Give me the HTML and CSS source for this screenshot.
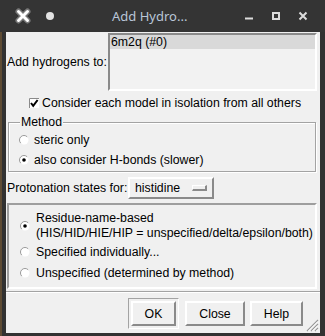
FILE: index.html
```html
<!DOCTYPE html>
<html>
<head>
<meta charset="utf-8">
<link rel="stylesheet" href="styles.css">
</head>
<body>
<div class="window">
  <div class="titlebar">
    <svg class="tb-x" width="18" height="18" viewBox="0 0 18 18">
      <path d="M4.5 4.5 L13.5 13.5 M13.5 4.5 L4.5 13.5" stroke="#7a7a7a" stroke-width="6" stroke-linecap="round"/>
      <path d="M4.5 4.5 L13.5 13.5 M13.5 4.5 L4.5 13.5" stroke="#ffffff" stroke-width="3" stroke-linecap="round"/>
    </svg>
    <span class="tb-dot"></span>
    <span class="tb-title">Add Hydro...</span>
    <svg class="tb-ctl tb-first" width="10" height="10" viewBox="0 0 10 10"><rect x="1" y="6.5" width="8" height="2" fill="#dcdcdc"/></svg>
    <svg class="tb-ctl" width="10" height="10" viewBox="0 0 10 10"><rect x="2" y="2" width="6" height="6" fill="none" stroke="#dcdcdc" stroke-width="2"/></svg>
    <svg class="tb-ctl" width="10" height="10" viewBox="0 0 10 10"><path d="M1.5 1.5 L8.5 8.5 M8.5 1.5 L1.5 8.5" stroke="#dcdcdc" stroke-width="2"/></svg>
  </div>
  <div class="body">
    <div class="target-row">
      <span class="target-label">Add hydrogens to:</span>
      <div class="listbox"><div class="list-item">6m2q (#0)</div></div>
    </div>
    <div class="check-row">
      <svg class="checkbox" width="10" height="10" viewBox="0 0 10 10">
        <rect x="0" y="0" width="10" height="10" fill="#fff"/>
        <path d="M0.5 10 V0.5 H10" stroke="#8a8a8a" fill="none"/>
        <path d="M2 5 L4.2 7.8 L8.6 2" stroke="#000" stroke-width="2" fill="none"/>
      </svg>
      <span>Consider each model in isolation from all others</span>
    </div>
    <fieldset class="method">
      <legend>Method</legend>
      <div class="options">
        <div class="radio-row">
          <svg class="radio" width="10" height="10" viewBox="0 0 10 10"><circle cx="5" cy="5" r="4.5" fill="#fff"/><path d="M1.8 8.2 A4.5 4.5 0 0 1 8.2 1.8" stroke="#9a9a9a" fill="none"/></svg>
          <span>steric only</span>
        </div>
        <div class="radio-row">
          <svg class="radio" width="10" height="10" viewBox="0 0 10 10"><circle cx="5" cy="5" r="4.5" fill="#fff"/><path d="M1.8 8.2 A4.5 4.5 0 0 1 8.2 1.8" stroke="#9a9a9a" fill="none"/><circle cx="5" cy="5" r="1.8" fill="#000"/></svg>
          <span>also consider H-bonds (slower)</span>
        </div>
      </div>
    </fieldset>
    <div class="proto-row">
      <span class="proto-label">Protonation states for:</span>
      <div class="menubutton"><span>histidine</span><span class="indicator"></span></div>
    </div>
    <div class="proto-frame">
      <div class="radio-row tall">
        <svg class="radio" width="10" height="10" viewBox="0 0 10 10"><circle cx="5" cy="5" r="4.5" fill="#fff"/><path d="M1.8 8.2 A4.5 4.5 0 0 1 8.2 1.8" stroke="#9a9a9a" fill="none"/><circle cx="5" cy="5" r="1.8" fill="#000"/></svg>
        <span class="two-line">Residue-name-based<br>(HIS/HID/HIE/HIP = unspecified/delta/epsilon/both)</span>
      </div>
      <div class="radio-row mid">
        <svg class="radio" width="10" height="10" viewBox="0 0 10 10"><circle cx="5" cy="5" r="4.5" fill="#fff"/><path d="M1.8 8.2 A4.5 4.5 0 0 1 8.2 1.8" stroke="#9a9a9a" fill="none"/></svg>
        <span>Specified individually...</span>
      </div>
      <div class="radio-row mid">
        <svg class="radio" width="10" height="10" viewBox="0 0 10 10"><circle cx="5" cy="5" r="4.5" fill="#fff"/><path d="M1.8 8.2 A4.5 4.5 0 0 1 8.2 1.8" stroke="#9a9a9a" fill="none"/></svg>
        <span>Unspecified (determined by method)</span>
      </div>
    </div>
    <div class="buttons">
      <div class="default-ring"><button class="btn btn-ok">OK</button></div>
      <button class="btn btn-close">Close</button>
      <button class="btn btn-help">Help</button>
    </div>
    <svg class="grip" width="14" height="14" viewBox="0 0 14 14">
      <path d="M13 2 L2 13 M13 6 L6 13 M13 10 L10 13" stroke="#9a9a9a" stroke-width="1.2"/>
      <path d="M13 3.4 L3.4 13 M13 7.4 L7.4 13 M13 11.4 L11.4 13" stroke="#ffffff" stroke-width="1"/>
    </svg>
  </div>
</div>
</body>
</html>
```
FILE: styles.css
```css
html, body {
  margin: 0;
  padding: 0;
  background: #333;
}

.window {
  width: 325px;
  height: 336px;
  background: linear-gradient(to right, #5e4b33 0, #5e4b33 2px, #323232 2px);
  position: relative;
  overflow: hidden;
  font-family: "Liberation Sans", Arial, sans-serif;
  font-size: 12.3px;
  color: #000;
}

.titlebar {
  height: 32px;
  background: #343434;
  display: flex;
  align-items: center;
  padding-right: 17px;
}

.tb-x {
  margin-left: 14px;
  flex: none;
}

.tb-dot {
  width: 8px;
  height: 8px;
  border-radius: 50%;
  background: #e2e2e2;
  margin-left: 14px;
  flex: none;
}

.tb-title {
  margin-left: 58px;
  font-family: "Noto Sans", "DejaVu Sans", sans-serif;
  font-size: 13px;
  color: #b9c6d8;
  white-space: nowrap;
}

.tb-ctl {
  flex: none;
  margin-left: 17px;
}

.tb-first {
  margin-left: auto;
}

.body {
  margin-left: 6px;
  width: 314px;
  height: 301px;
  background: #f0f0f0;
  display: flex;
  flex-direction: column;
  padding-top: 1px;
  box-sizing: border-box;
  position: relative;
}

.target-row {
  display: flex;
  align-items: center;
  height: 58px;
  padding-left: 1px;
  flex: none;
}

.target-label {
  width: 101px;
  flex: none;
  white-space: nowrap;
}

.listbox {
  flex: 1;
  height: 58px;
  box-sizing: border-box;
  border: 2px solid;
  border-color: #8a8a8a #ffffff #ffffff #8a8a8a;
  margin-right: 3px;
  background: #f2f2f2;
}

.list-item {
  background: #d9d9d9;
  height: 14px;
  line-height: 14px;
  padding-left: 1px;
  white-space: nowrap;
}

.check-row {
  display: flex;
  align-items: center;
  height: 24px;
  padding-left: 23px;
  flex: none;
  white-space: nowrap;
}

.checkbox {
  margin-right: 3px;
  flex: none;
}

.method {
  margin: 0 4px 0 2px;
  padding: 0;
  border: 1px solid #a3a3a3;
  box-shadow: inset 1px 1px 0 #fff, 1px 1px 0 #fff;
  min-width: 0;
  flex: none;
}

.method legend {
  margin-left: 11px;
  padding: 0 1px;
  line-height: 14px;
  background: #f0f0f0;
}

.options {
  padding: 1px 0 1px 10px;
}

.radio-row {
  display: flex;
  align-items: center;
  height: 20px;
  white-space: nowrap;
}

.radio {
  flex: none;
  margin-right: 5px;
}

.proto-row {
  display: flex;
  align-items: center;
  height: 31px;
  padding-left: 1px;
  flex: none;
}

.proto-label {
  width: 121px;
  flex: none;
  white-space: nowrap;
}

.menubutton {
  width: 86px;
  height: 22px;
  box-sizing: border-box;
  border: 2px solid;
  border-color: #ffffff #8a8a8a #8a8a8a #ffffff;
  display: flex;
  align-items: center;
  justify-content: space-between;
  padding: 0 5px;
}

.indicator {
  width: 15px;
  height: 6px;
  box-sizing: border-box;
  border-style: solid;
  border-width: 1px 2px 2px 1px;
  border-color: #ffffff #8a8a8a #8a8a8a #ffffff;
}

.proto-frame {
  margin: 0 3px 0 1px;
  height: 86px;
  box-sizing: border-box;
  border: 2px solid;
  border-color: #9e9e9e #ffffff #ffffff #9e9e9e;
  padding: 5px 0 0 11px;
  flex: none;
}

.proto-frame .radio {
  margin-right: 6px;
}

.radio-row.tall {
  height: 31px;
}

.radio-row.mid {
  height: 21px;
}

.two-line {
  line-height: 15px;
}

.buttons {
  margin-top: 2px;
  border-top: 1px solid #a3a3a3;
  box-shadow: inset 0 1px 0 #fff;
  flex: 1;
  display: flex;
  justify-content: flex-end;
  align-items: center;
  padding: 2px 17px 0 0;
}

.default-ring {
  padding: 2px;
  border: 1px solid;
  border-color: #a3a3a3 #ffffff #ffffff #a3a3a3;
  display: flex;
  margin-right: 6px;
}

.btn {
  height: 25px;
  box-sizing: border-box;
  border: 2px solid;
  border-color: #ffffff #8a8a8a #8a8a8a #ffffff;
  background: #f0f0f0;
  font-family: "Liberation Sans", Arial, sans-serif;
  font-size: 12.3px;
  color: #000;
  padding: 0;
  margin: 0;
}

.btn-ok { width: 45px; }
.btn-close { width: 60px; margin-right: 5px; }
.btn-help { width: 53px; }

.grip {
  position: absolute;
  right: 1px;
  bottom: 1px;
}
```
